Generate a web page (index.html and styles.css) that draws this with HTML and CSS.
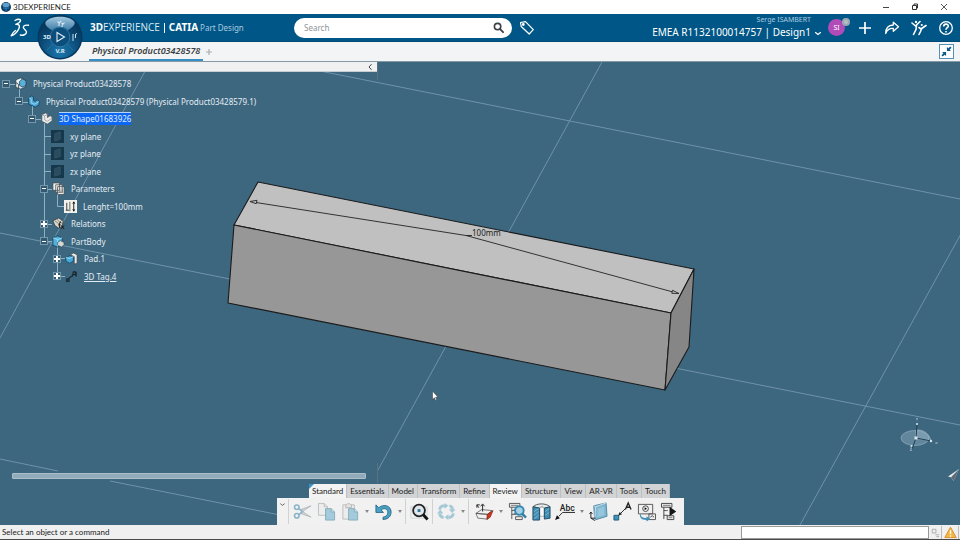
FILE: index.html
```html
<!DOCTYPE html>
<html lang="en">
<head>
<meta charset="utf-8">
<title>3DEXPERIENCE</title>
<link rel="stylesheet" href="styles.css">
</head>
<body>
<div class="titlebar">
  <svg class="app-icon" viewBox="0 0 10 10"><circle cx="5" cy="5" r="5" fill="#0d3f6b"/><ellipse cx="5" cy="3" rx="3.5" ry="2.2" fill="#5f9fca"/><path d="M2 6h6M5 6v3" stroke="#2e86bf"/></svg>
  <span class="app-name">3DEXPERIENCE</span>
  <div class="window-buttons">
    <button type="button" aria-label="Minimize"><svg viewBox="0 0 8 8"><path d="M1 4.5h6" stroke="#444"/></svg></button>
    <button type="button" aria-label="Restore"><svg viewBox="0 0 8 8"><path d="M1.5 2.5h4v4h-4zM3 2.5v-1.500h3.500v4h-1" fill="none" stroke="#333"/></svg></button>
    <button type="button" aria-label="Close"><svg viewBox="0 0 8 8"><path d="M1 1l6 6M7 1l-6 6" stroke="#444" stroke-width=".9"/></svg></button>
  </div>
</div>

<header class="topbar">
  <div class="brand">
    <svg class="ds-logo" viewBox="0 0 20 20" fill="none" stroke="#fff" stroke-width="1.400" stroke-linecap="round" stroke-linejoin="round"><path d="M5 2.500C7.500 1 10.800.8 10.500 2.600 10.200 4.200 8 5.500 5.800 6.300c3.400-.3 4.700 1.500 2.700 5C6.900 14.300 4.500 16.700 1.200 17.800c1-2.600 2.300-4 4.300-5.300"/><path d="M18.500 7.300c-2.200-.6-5.200.2-5.200 2 0 1.700 3.200 2.700 3.200 4.800 0 2.400-3.500 3.700-6.200 2.900"/></svg>
    <p class="product"><b>3D</b><span>EXPERIENCE</span><i></i><b>CATIA</b><small>Part Design</small></p>
  </div>
  <form class="search">
    <input type="search" aria-label="Search" placeholder="Search">
    <button type="button" aria-label="Run search"><svg viewBox="0 0 12 12" fill="none" stroke="#3b3f43"><circle cx="5" cy="5" r="3.500" stroke-width="1.700"/><path d="M7.700 7.700L11 11" stroke-width="2" stroke-linecap="round"/></svg></button>
  </form>
  <button class="icon-button tag" type="button" aria-label="Tags"><svg viewBox="0 0 16 16" fill="none" stroke="#fff" stroke-width="1.200" stroke-linejoin="round"><path d="M1.500 2.500l5-.8 7.800 8-4.100 4.300-8-7.500z"/><circle cx="4.300" cy="4.500" r=".8" fill="#fff"/></svg></button>
  <div class="account">
    <span class="user">Serge ISAMBERT</span>
    <span class="tenant">EMEA R1132100014757 | Design1</span>
  </div>
  <button class="icon-button chevron" type="button" aria-label="Change context"><svg viewBox="0 0 8 8" fill="none" stroke="#fff" stroke-width="1.300"><path d="M1.200 3.300l2.800 2.200 2.800-2.200"/></svg></button>
  <button class="avatar" type="button">SI<i></i></button>
  <nav class="actions" aria-label="Actions">
    <button class="icon-button" type="button" aria-label="Add"><svg viewBox="0 0 16 16"><path d="M8 2v12M2 8h12" stroke="#fff" stroke-width="1.700"/></svg></button>
    <button class="icon-button" type="button" aria-label="Share"><svg viewBox="0 0 16 16" fill="none" stroke="#fff" stroke-width="1.300" stroke-linejoin="round"><path d="M9.300 5V2.200l5.200 4.600-5.200 4.500V8.500C6 8.200 3.300 9.500 1.700 13.500 1.700 8.500 4.500 5.200 9.300 5z"/></svg></button>
    <button class="icon-button" type="button" aria-label="Communities"><svg viewBox="0 0 16 16" fill="none" stroke="#fff" stroke-width="1.600" stroke-linecap="round" stroke-linejoin="round"><circle cx="5" cy="2" r="1.200" fill="#fff" stroke="none"/><circle cx="10.800" cy="5" r="1.100" fill="#fff" stroke="none"/><path d="M1 3l3.500 3L9 1.500M5.500 5.500l-.5 4L2.500 14.500M8 7.500l2 1.500 5-3.500M10.500 9l-1 2.500L8 14.500"/></svg></button>
    <button class="icon-button" type="button" aria-label="Help"><svg viewBox="0 0 16 16" fill="none" stroke="#fff" stroke-width="1.300"><circle cx="8" cy="8" r="6.300"/><path d="M5.700 6.400c0-3 4.600-3 4.600-.3C10.300 7.800 8 7.700 8 9.700M8 11v1.400" stroke-width="1.600"/></svg></button>
  </nav>
  <button class="compass" type="button" aria-label="Compass">
    <svg viewBox="0 0 46 46">
      <defs><radialGradient id="disc" cx="50%" cy="85%" r="75%"><stop offset="0" stop-color="#1b78ad"/><stop offset=".7" stop-color="#0a4672"/><stop offset="1" stop-color="#073659"/></radialGradient><linearGradient id="shine" x2="0" y2="1"><stop offset="0" stop-color="#a4c9e0"/><stop offset="1" stop-color="#3c7ca8"/></linearGradient></defs>
      <circle cx="23" cy="23" r="22.500" fill="#063961"/><circle cx="23" cy="23" r="21" fill="url(#disc)"/>
      <path d="M8.500 8C13 1 33 1 37.500 8c1 4-4 6-6.500 8.500a11 11 0 0 0-16 0C12 14 7.500 12 8.500 8z" fill="url(#shine)"/>
      <circle cx="23" cy="23" r="9.800" fill="#0b4d7b" stroke="#3f84ad" stroke-width=".7"/>
      <path d="M16 30l-6 6M30 30l6 6" stroke="#2b75a2" stroke-width=".8"/>
      <path d="M20 18.500v9l7.500-4.500z" fill="none" stroke="#e5eff5" stroke-width="1.100"/>
      <path d="M20.500 7.500l1.700 1.500 2-2M22 9v3M24.500 9l1.500 1 1.500-1.400M25.500 10l-.5 3" fill="none" stroke="#d9e9f3" stroke-width="1.100"/>
      <path d="M36 20v7M38.500 20v4M40 19.500c-1.300 0-1.500 1-1.500 2" fill="none" stroke="#cfe1ed"/>
      <text x="6" y="25">3D</text><text x="18.500" y="39">V.R</text>
    </svg>
  </button>
</header>

<nav class="doc-tabs" aria-label="Documents">
  <a class="doc-tab" href="#doc">Physical Product03428578</a>
  <button class="add-tab" type="button" aria-label="New tab"><svg viewBox="0 0 8 8"><path d="M4 1v6M1 4h6" stroke="#a9afb4" stroke-width="1.200"/></svg></button>
  <button class="collapse" type="button" aria-label="Exit full view"><svg viewBox="0 0 16 16" fill="#0a5a8c"><path d="M8.500 2.500l1.700 1.600 2.500-2.300 1.500 1.500-2.400 2.500 1.700 1.700h-5zM7.500 13.500l-1.700-1.600-2.500 2.300-1.500-1.500 2.400-2.500L2.500 8.500h5z"/></svg></button>
</nav>

<main class="viewport" id="doc">
  <svg class="scene" viewBox="0 62 960 463" preserveAspectRatio="xMidYMid slice" role="img" aria-label="Block, 100mm long">
    <g fill="none" stroke="#7fa2b9" stroke-width=".9" opacity=".85">
      <path d="M150 62L0 338M602 62L378 470M978 203L800 525"/>
      <path d="M275 62L960 199M0 233l960 192M0 459l58 12M110 481l220 44"/>
    </g>
    <path d="M377.500 62v18M377.500 463v20" stroke="#5f6f7b"/>
    <g stroke="#1b1b1b" stroke-width="1.100" stroke-linejoin="round">
      <path d="M258 182L694 269 671 313 234 225z" fill="#c0c0c0"/>
      <path d="M234 225L671 313 665 390 228 303z" fill="#979797"/>
      <path d="M671 313L694 269 689 347 665 390z" fill="#868686"/>
    </g>
    <g fill="none" stroke="#222" stroke-width=".9"><path d="M256 202.500L466 235.500h6M466 235.500L673 292"/><path d="M250 201.500l7-1.200-.8 3.400zM679 293.500l-6.500-3.200-.7 3z" fill="#c0c0c0"/></g>
    <text class="dimension" x="472" y="236">100mm</text>
    <g fill="#a9c3d3" fill-opacity=".35" stroke="#9bb5c6" stroke-width=".6"><ellipse cx="915" cy="438" rx="14" ry="7.500"/><path d="M916 430c7-1 14 4 15 11l-16-3z"/><path d="M916 438l1-13M916 438l-4 11M916 438l15 3" stroke="#223e50" stroke-width="1" fill="none"/></g>
    <g fill="#dbe7ee"><path d="M914.500 436.500h3v3h-3z"/><circle cx="917" cy="424" r="1"/><circle cx="931" cy="441" r="1.200"/><circle cx="911.500" cy="446" r="1"/></g>
    <path d="M916 418l1 1 1-1M917 419v1.500M935.500 442l2 2M937.500 442l-2 2M910 448h2l-2 2.500h2" fill="none" stroke="#a8c0ce" stroke-width=".7"/>
    <path d="M959 469l-11 7.500 3 .8 2.500 3.700z" fill="#e9eef0"/><path d="M959 469l-8 8.300 2.500 3.700z" fill="#5d6a72"/>
    <path d="M432.500 391v8.500l1.900-1.700 1.200 2.700 1.200-.6-1.200-2.600h2.400z" fill="#fff" stroke="#333" stroke-width=".5"/>
  </svg>

  <aside class="tree-panel">
    <div class="panel-head"><button type="button" aria-label="Hide tree"><svg viewBox="0 0 8 8"><path d="M5.500 1.200L3 4l2.500 2.800" fill="none" stroke="#444"/></svg></button></div>
    <ul class="tree">
      <svg class="branches" viewBox="0 75 66 210" aria-hidden="true"><path d="M10 84.500h5M19.500 88v10M23 102.500h5M32.500 106v9M36 119.500h5M44.500 123v118M44.500 136.500h8M44.500 154.500h8M44.500 171.500h8M48 189.500h4M48 224.500h4M48 241.500h4M57.500 194v12.500h8M57.500 246v30M61 258.500h4M61 276.500h4" fill="none" stroke="#8db0c4"/></svg>
      <li class="node level-0"><button class="toggle" type="button" aria-label="Collapse"></button><svg viewBox="0 0 14 14"><path d="M2 3l5-2 5 2v8l-5 2-5-2z" fill="#e8edf0" stroke="#253742" stroke-width=".7"/><path d="M6 5l3-3 4 2v5l-4 2-3-2z" fill="#5bb0d8" stroke="#153c55" stroke-width=".8"/><path d="M2 6l3 2v5" fill="none" stroke="#384750"/></svg><span>Physical Product03428578</span></li>
      <li class="node level-1"><button class="toggle" type="button" aria-label="Collapse"></button><svg viewBox="0 0 14 14"><path d="M2 3l3-2 2 1v4l2 1 2-2 2 1.500v4l-4 2.500-7-3z" fill="#4aa8d6" stroke="#123b57" stroke-width=".8" stroke-linejoin="round"/><path d="M2 3l2.500 1.200v4.300l3.500 1.500 5-3" fill="none" stroke="#b4e0f4" stroke-width=".8"/></svg><span>Physical Product03428579 (Physical Product03428579.1)</span></li>
      <li class="node level-2"><button class="toggle" type="button" aria-label="Collapse"></button><svg viewBox="0 0 14 14"><path d="M2 3l4-2 2 1v4l3-2 2 1.500v4L8 13l-6-3z" fill="#ecedea" stroke="#4b5860" stroke-width=".8" stroke-linejoin="round"/><path d="M2 3l3 1.200v4.300l3 1.500 5-3.500M5 4.200L8 2.500" fill="none" stroke="#8b9499" stroke-width=".8"/></svg><span class="selected">3D Shape01683926</span></li>
      <li class="node level-3 plane"><svg viewBox="0 0 14 14"><path d="M0 0h14v14H0z" fill="#17374b"/><path d="M4 4l6-2v8l-6 2z" fill="#294c5e" stroke="#2e5468"/></svg><span>xy plane</span></li>
      <li class="node level-3 plane"><svg viewBox="0 0 14 14"><path d="M0 0h14v14H0z" fill="#17374b"/><path d="M4 4l6-2v8l-6 2z" fill="#294c5e" stroke="#2e5468"/></svg><span>yz plane</span></li>
      <li class="node level-3 plane"><svg viewBox="0 0 14 14"><path d="M0 0h14v14H0z" fill="#17374b"/><path d="M4 4l6-2v8l-6 2z" fill="#294c5e" stroke="#2e5468"/></svg><span>zx plane</span></li>
      <li class="node level-3"><button class="toggle" type="button" aria-label="Collapse"></button><svg viewBox="0 0 14 14"><g fill="#f0f0ec" stroke="#454b4f" stroke-width=".8"><path d="M1 1h7v8H1zM4 3h7v8H4zM6 5h7v8.500H6z"/></g><path d="M8.500 7v5M11 7v5" stroke="#777"/></svg><span>Parameters</span></li>
      <li class="node level-4 leaf"><svg viewBox="0 0 14 14"><path d="M0 0h14v14H0z" fill="#f2f2ef"/><path d="M3 3v8M2 11h4" stroke="#333"/><path d="M5.500 2H7v10H5.500z" fill="#8a8a85"/><path d="M10.500 2v10M9.500 4l1-2 1 2M9.500 10l1 2 1-2" fill="none" stroke="#111"/></svg><span>Lenght=100mm</span></li>
      <li class="node level-3"><button class="toggle plus" type="button" aria-label="Expand"></button><svg viewBox="0 0 14 14"><path d="M1 4l6-3 5 3-1 6-4 2-4-3z" fill="#d8d5ca" stroke="#30383d" stroke-width=".8"/><path d="M3 4l4 3 4-4M5 2l5 5" fill="none" stroke="#696b67" stroke-width=".8"/><path d="M10 6c-2-1-2 1-2 6M6.500 8.500h3M10 9l3 4M13 9l-3.500 4" fill="none" stroke="#151515"/></svg><span>Relations</span></li>
      <li class="node level-3"><button class="toggle" type="button" aria-label="Collapse"></button><svg viewBox="0 0 14 14"><path d="M1 3l5-2 5 2v7l-5 3-5-2z" fill="#4db2df" stroke="#123c55" stroke-width=".8"/><path d="M1 3l5 2v7M6 5l5-2" fill="none" stroke="#b8e5f6" stroke-width=".8"/><path d="M6 8l3-2 4 2v3l-3 2-4-2z" fill="#d3d7d7" stroke="#34444d" stroke-width=".7"/></svg><span>PartBody</span></li>
      <li class="node level-4"><button class="toggle plus" type="button" aria-label="Expand"></button><svg viewBox="0 0 14 14"><path d="M6 3l3-2 4 2v9l-3 1V5z" fill="#e9ebea" stroke="#3c464b" stroke-width=".7"/><path d="M1 6l4-2 4 1v5l-4 2-4-2z" fill="#42a9d9" stroke="#174761" stroke-width=".8"/><path d="M1 6l4 1 4-2" fill="none" stroke="#abdef3"/></svg><span>Pad.1</span></li>
      <li class="node level-4"><button class="toggle plus" type="button" aria-label="Expand"></button><svg viewBox="0 0 14 14"><path d="M3 10l5-4" stroke="#18252d" stroke-width="1.200"/><path d="M1 9h4v4H1z" fill="#1e3442"/><path d="M8 7l1-5h2l1 5M8 5h4M12 2v5" fill="none" stroke="#17242b" stroke-width="1.200"/></svg><span class="tag-link">3D Tag.4</span></li>
    </ul>
    <div class="scroll-thumb"></div>
  </aside>

  <section class="action-bar" aria-label="Action bar">
    <div class="sections">
      <button type="button" class="on corner">Standard</button><button type="button">Essentials</button><button type="button">Model</button><button type="button">Transform</button><button type="button">Refine</button><button type="button" class="on">Review</button><button type="button">Structure</button><button type="button">View</button><button type="button">AR-VR</button><button type="button">Tools</button><button type="button">Touch</button>
    </div>
    <div class="commands">
      <button class="fold" type="button" aria-label="Fold"><svg viewBox="0 0 8 8"><path d="M1.500 3L4 5l2.500-2" fill="none" stroke="#555"/></svg></button>
      <div class="group">
        <button type="button" aria-label="Cut"><svg viewBox="0 0 20 20" fill="none"><path d="M8 8l11-4-9 6zM8 12l11 4-9-6z" fill="#d4d7d8" stroke="#a4abae" stroke-width=".7"/><g stroke="#8bb4c7" stroke-width="1.700"><circle cx="4" cy="5.500" r="2.400"/><circle cx="4" cy="14.500" r="2.400"/><path d="M6 7l4 3-4 3.500"/></g></svg></button>
        <button type="button" aria-label="Copy"><svg viewBox="0 0 20 20"><path d="M1.500 1.500h6L11 5v9H1.500z" fill="#ededed" stroke="#bdbfc0"/><path d="M7.500 1.500V5H11" fill="none" stroke="#bdbfc0"/><path d="M9 7h6l3.500 3.500V19H9z" fill="#a3cbdc" stroke="#88adbb"/><path d="M15 7v3.500h3.500" fill="#cfe4ec" stroke="#88adbb"/></svg></button>
        <button type="button" aria-label="Paste"><svg viewBox="0 0 20 20"><path d="M2 3h12v15H2z" fill="#ececec" stroke="#bcbcbc"/><path d="M5 4c0-3 6-3 6 0v2H5z" fill="#e4e4e4" stroke="#b5b5b5"/><path d="M8 7h6l3.500 3.500V19H8z" fill="#a3cbdc" stroke="#88adbb"/><path d="M14 7v3.500h3.500" fill="#cfe4ec" stroke="#88adbb"/></svg></button>
        <button class="caret" type="button" aria-label="Paste options"></button>
        <button type="button" aria-label="Undo"><svg viewBox="0 0 20 20"><path d="M2 3v8h8L7.500 8.500c4-3.500 7.500-.3 7 3-.2 2.500-2 4-5 4.500v2.500c5.500-.3 8.500-3.500 8.500-8C18 4 10.500 1.500 5 6z" fill="#49a2c6" stroke="#195774" stroke-width=".8" stroke-linejoin="round"/></svg></button>
        <button class="caret" type="button" aria-label="Undo options"></button>
      </div>
      <div class="group">
        <button type="button" aria-label="Fit all"><svg viewBox="0 0 20 20"><path d="M1 5h17v12H1z" fill="none" stroke="#d0d4d6"/><circle cx="9.500" cy="9" r="6.200" fill="#e1e8eb" stroke="#222" stroke-width="1.900"/><path d="M14 13.500l4.500 5" stroke="#111" stroke-width="3"/><path d="M8 7.500h3v3H8z" fill="#2c7799"/></svg></button>
      </div>
      <div class="group">
        <button type="button" aria-label="Update"><svg viewBox="0 0 20 20" fill="none"><path d="M8.500 4H6a4 4 0 0 0-3 4M16 8V6a4 4 0 0 0-3-2M12 16h2a4 4 0 0 0 3-4M3 12v1a4 4 0 0 0 4 3" stroke="#a5c8d6" stroke-width="3"/><path d="M8 1l4 3-4 3zM12.500 7.500h7L16 11.500zM12 13l-4 3 4 3zM0 12h6.500L3.500 8z" fill="#a5c8d6"/></svg></button>
        <button class="caret" type="button" aria-label="Update options"></button>
      </div>
      <div class="group last">
        <button type="button" aria-label="Section cut"><svg viewBox="0 0 20 20"><path d="M1 12l6-4 11 1-5 4zM1 12l12 1v5L3 17z" fill="#f1f1f1" stroke="#555" stroke-width=".8"/><path d="M13 13l6-4-3 7-3.500 2.500z" fill="#d53319" stroke="#762312" stroke-width=".7"/><path d="M8 10V3M6 4.500L8 2l2 2.500M4 6L2 3M2 6V3h3" fill="none" stroke="#222"/></svg></button>
        <button class="caret" type="button" aria-label="Section options"></button>
        <button type="button" aria-label="Search tree"><svg viewBox="0 0 20 20" fill="none"><path d="M1.500 1.500h11v4h-11zM4 5.500V18M4 9h4M4 13h5M8 15.500h7v3H8z" stroke="#555"/><path d="M3 3.500h8M6 8h3M6 12h3" stroke="#777"/><circle cx="12" cy="9" r="4.500" fill="#a3d2e6" stroke="#3688ae" stroke-width="2"/><path d="M15 12.500l4 4" stroke="#2f7fa4" stroke-width="2.500"/></svg></button>
        <button type="button" aria-label="Clipping"><svg viewBox="0 0 20 20"><path d="M1 5C5 1 15 1 19 5l-6 1.500c-1-1.500-4-1.500-5 0z" fill="#e6eaeb" stroke="#495359"/><path d="M8 6.500c1-1.500 4-1.500 5 0V15H8z" fill="#fafafa" stroke="#7b868b" stroke-width=".6"/><path d="M1 5l7 1.500V19H1zM13 6.500L19 5v12l-6 1z" fill="#3f8db3" stroke="#214b60"/><path d="M2 10l5-3M2 14l5-4M2 18l5-4M14 10l4-3M14 14l4-3" stroke="#8fc4db" stroke-width=".8"/></svg></button>
        <button type="button" aria-label="Text with leader"><svg viewBox="0 0 20 20"><path d="M3 15l4-4h13" fill="none" stroke="#222"/><path d="M-1 19l2-5 3 3z" fill="#111"/><text x="4" y="9">Abc</text></svg></button>
        <button class="caret" type="button" aria-label="Text options"></button>
        <button type="button" aria-label="View plane"><svg viewBox="0 0 20 20"><path d="M5 4l13-3 1 14-13 4z" fill="#7fb6d0" stroke="#5689a3"/><path d="M5 4l2 1 11-4M7 5l-1 14" fill="none" stroke="#c6dfea"/><path d="M9 7l7-2v9l-7 2z" fill="#96c6dc"/><path d="M2 11v6h5M2 17l4 2.500M.5 12.500L2 10.500l1.500 2" fill="none" stroke="#222"/></svg></button>
        <button type="button" aria-label="3D annotation"><svg viewBox="0 0 20 20"><path d="M1 14h5v5H1z" fill="#3c94bd" stroke="#235a73"/><path d="M6 14l7-7" stroke="#222"/><path d="M5.500 14.500l1.500-4 2.500 2.500z" fill="#222"/><path d="M13 8l3-7 3 7M14 5.500h4" fill="none" stroke="#222" stroke-width="1.400"/></svg></button>
        <button type="button" aria-label="Capture"><svg viewBox="0 0 20 20"><path d="M1.500 2.500h15v10h-15zM12.500 12.500h7v6h-7z" fill="#f0f0f0" stroke="#555"/><circle cx="9" cy="7" r="3" fill="none" stroke="#444"/><path d="M8 5.500v3l2.500-1.500z"/><path d="M4 13c0 4 4 4 6 4v-2l4 3-4 2.500V19c-5 0-7-2-7-6z" fill="#3c8fb4"/><path d="M14 16l2-1.500 2 1.500" fill="none" stroke="#444"/></svg></button>
        <button type="button" aria-label="Play tree"><svg viewBox="0 0 20 20"><path d="M.5 1.500h11v4H.5zM3 5.500V18M3 9h4M3 14h4M6.500 14.500h7v4h-7z" fill="none" stroke="#444"/><path d="M2 3.500h8M5 9h2M8 16.500h4" stroke="#777"/><path d="M9 5l7 5-7 5z" fill="#161616"/></svg></button>
      </div>
    </div>
  </section>
</main>

<footer class="status">
  <span>Select an object or a command</span>
  <input type="text" aria-label="Command">
  <button type="button" aria-label="Dialog"><svg viewBox="0 0 12 12" fill="none" stroke="#aaa"><path d="M2.500 2.500h4v4h-4zM6 8.500h4M7 10.500h3"/></svg></button>
  <button type="button" class="warning" aria-label="Warnings"><svg viewBox="0 0 14 14"><path d="M7 1.200L13.200 12.500H.8z" fill="#f3b744" stroke="#d9912b" stroke-linejoin="round"/><path d="M7 4.500v4.200M7 10v1.500" stroke="#fff" stroke-width="1.400"/></svg></button>
</footer>
</body>
</html>
```
FILE: styles.css
```css
* { box-sizing: border-box; }

body {
  margin: 0;
  min-height: 100vh;
  display: flex;
  flex-direction: column;
  font-family: "Noto Sans", "Open Sans", sans-serif;
  font-size: 8px;
  color: #222;
  background: #3d667f;
}

button {
  padding: 0;
  border: 0;
  background: none;
  font: inherit;
  color: inherit;
}

svg { display: block; }

/* Window title */
.titlebar {
  display: flex;
  align-items: center;
  height: 14px;
  padding-left: 1px;
  gap: 2px;
  background: #fff;
}
.app-icon { width: 10px; height: 10px; }
.app-name { font-family: Lato, sans-serif; font-size: 8px; line-height: 14px; }
.window-buttons { display: flex; margin-left: auto; gap: 5px; padding-right: 4px; }
.window-buttons button { width: 24px; height: 14px; display: grid; place-items: center; }
.window-buttons svg { width: 8px; height: 8px; }

/* Top bar */
.topbar {
  position: relative;
  z-index: 2;
  display: flex;
  align-items: center;
  height: 28px;
  padding-right: 6px;
  background: #005686;
  border-bottom: 1px solid #004a75;
  color: #fff;
}
.brand { flex: 0 0 294px; display: flex; align-items: center; padding-left: 10px; gap: 60px; }
.ds-logo { width: 20px; height: 20px; }
.product { display: flex; align-items: baseline; margin: 0; font-size: 10px; line-height: 16px; }
.product span { font-family: "Open Sans", sans-serif; color: #dcebf4; }
.product i { align-self: center; width: 1px; height: 10px; margin: 0 4px; background: #fff; }
.product small { margin-left: 2px; font-size: 8px; color: #a9cbe0; }
.search {
  flex: 0 1 218px;
  display: flex;
  align-items: center;
  height: 20px;
  padding: 0 8px 0 10px;
  border-radius: 10px;
  background: #fff;
}
.search input { flex: 1; min-width: 0; padding: 0; border: 0; outline: 0; background: none; font: 8px "Noto Sans", sans-serif; }
.search input::placeholder { color: #8f9499; }
.search svg { width: 11px; height: 11px; }
.icon-button svg { width: 16px; height: 16px; }
.tag { margin-left: 7px; }
.account { margin-left: auto; display: flex; flex-direction: column; align-items: flex-end; }
.user { font-size: 7px; line-height: 8px; color: #a9cbe0; }
.tenant { font-size: 10px; line-height: 16px; white-space: nowrap; }
.chevron { margin: 10px 6px 0 3px; }
.chevron svg { width: 8px; height: 8px; }
.avatar {
  position: relative;
  width: 17px;
  height: 17px;
  border-radius: 50%;
  background: #b14bb8;
  color: #fff;
  font-size: 7px;
}
.avatar i { position: absolute; right: -5px; top: -1px; width: 8px; height: 8px; border-radius: 50%; background: #b4bfc7; border: 2px solid #9da9b2; }
.actions { display: flex; gap: 11px; margin-left: 12px; }
.compass { position: absolute; left: 37px; top: 0; width: 46px; height: 46px; }
.compass text { fill: #e0edf5; font: bold 6px "Noto Sans", sans-serif; }

/* Document tabs */
.doc-tabs {
  display: flex;
  align-items: stretch;
  height: 20px;
  padding: 0 6px 0 89px;
  background: #f2f4f5;
  border-bottom: 1px solid #8799a5;
}
.doc-tab {
  padding: 0 3px;
  border-bottom: 2px solid #368ec4;
  color: #3b3f44;
  font-size: 9px;
  font-weight: 600;
  font-style: italic;
  line-height: 17px;
  text-decoration: none;
}
.add-tab { margin-left: 2px; }
.add-tab svg { width: 8px; height: 8px; }
.collapse { align-self: center; margin-left: auto; width: 15px; height: 15px; border: 1px solid #5590b5; background: #fff; }
.collapse svg { width: 13px; height: 13px; }

/* 3D view */
.viewport { position: relative; flex: 1; display: flex; min-height: 463px; }
.scene { position: absolute; inset: 0; width: 100%; height: 100%; }
.dimension { font: 8px "Noto Sans", sans-serif; fill: #222; }

.tree-panel { position: relative; flex: 0 0 377px; display: flex; flex-direction: column; }
.panel-head { display: flex; justify-content: flex-end; height: 10px; padding-right: 3px; background: #f1f1f1; border-bottom: 1px solid #c6ccd0; }
.panel-head svg { width: 8px; height: 8px; }
.tree {
  position: relative;
  display: grid;
  grid-auto-rows: 1fr;
  height: 210px;
  margin: 3px 0 0;
  padding: 0;
  list-style: none;
  color: #e3edf3;
}
.branches { position: absolute; left: 0; top: 0; width: 66px; height: 210px; }
.node { position: relative; display: flex; align-items: center; white-space: nowrap; }
.node svg { width: 13px; height: 13px; margin: 0 6px 0 4px; }
.level-0 { padding-left: 2px; }
.level-1 { padding-left: 15px; }
.level-2 { padding-left: 28px; }
.level-3 { padding-left: 40px; }
.level-4 { padding-left: 53px; }
.plane { padding-left: 47px; }
.leaf { padding-left: 60px; }
.toggle {
  width: 8px;
  height: 8px;
  border: 1px solid #7398ad;
  background: linear-gradient(#fff, #fff) center / 4px 1px no-repeat #34596e;
}
.plus { background: linear-gradient(#fff, #fff) center / 6px 2px no-repeat, linear-gradient(#fff, #fff) center / 2px 6px no-repeat #34596e; }
.selected { background: #0a68f5; line-height: 12px; border-top: 1px solid #b8d4f5; }
.tag-link { text-decoration: underline; }
.scroll-thumb { height: 6px; margin: auto 11px 46px 12px; background: #91abbb; border: 1px solid #aabfcb; border-radius: 1px; }

/* Action bar */
.action-bar { position: absolute; left: 277px; bottom: 0; display: flex; flex-direction: column; align-items: flex-start; }
.sections { display: flex; margin-left: 32px; }
.sections button { height: 14px; padding: 0 3px; background: #d1d3d4; border-right: 1px solid #bdc0c2; font-family: Lato, sans-serif; font-size: 8px; line-height: 14px; white-space: nowrap; }
.sections .on { background: #f3f3f3; }
.sections .corner { background: linear-gradient(135deg, #3991c6 3px, #f3f3f3 4px); }
.commands { display: flex; height: 27px; background: #f1f1f1; }
.fold { align-self: flex-start; width: 11px; padding: 3px 2px; }
.fold svg { width: 7px; height: 7px; }
.group { display: flex; align-items: center; margin: 1px 0; padding: 0 1px; border-left: 1px solid #cfd1d2; }
.group.last { padding: 0 2px 0 3px; }
.group button { width: 24px; height: 24px; display: grid; place-items: center; }
.group svg { width: 19px; height: 19px; overflow: visible; }
.group text { font: 500 9px Roboto, sans-serif; fill: #222; }
.group .caret { width: 9px; }
.caret::before { content: ""; border: 2px solid transparent; border-top: 3px solid #888; border-bottom: 0; }

/* Status line */
.status { display: flex; align-items: center; height: 15px; padding: 0 1px 0 2px; background: #f0f0f0; border-bottom: 1px solid #4a4a4a; font-family: Lato, sans-serif; }
.status input { width: 188px; height: 13px; margin-left: auto; padding: 0 2px; border: 1px solid #999; background: #fff; font: inherit; }
.status button { width: 13px; height: 13px; display: grid; place-items: center; border-right: 1px solid #bbb; }
.status .warning { width: 16px; margin-left: 1px; }
.status svg { width: 11px; height: 11px; }
.status .warning svg { width: 13px; height: 13px; }
```
